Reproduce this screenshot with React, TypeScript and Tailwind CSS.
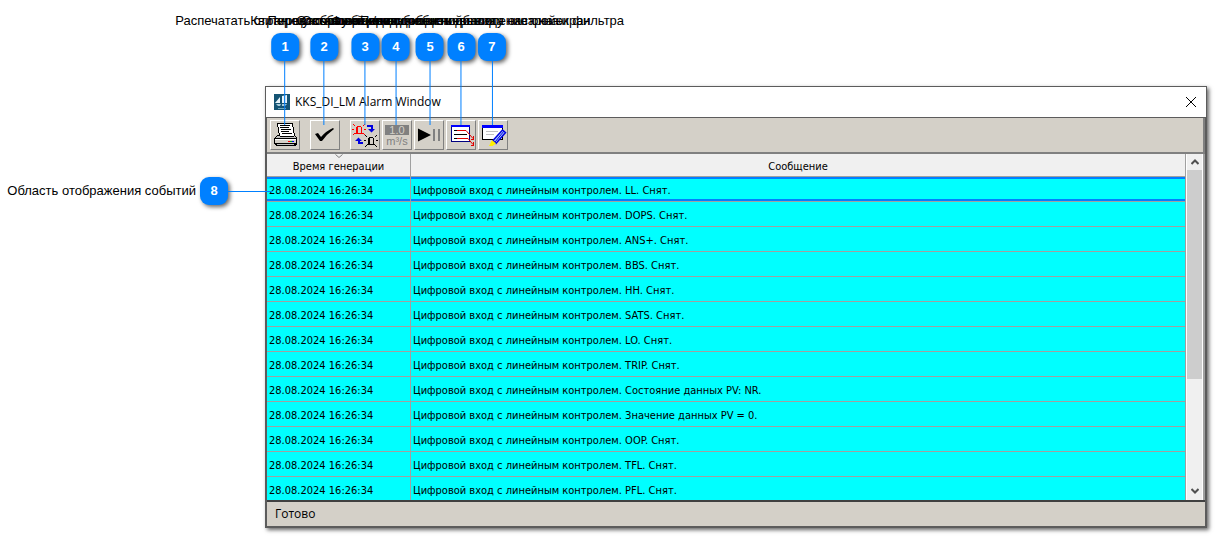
import type { ReactNode } from 'react'

type AlarmEvent = { time: string; message: string }

const PREFIX = 'Цифровой вход с линейным контролем. '

const events: AlarmEvent[] = [
  'LL. Снят.',
  'DOPS. Снят.',
  'ANS+. Снят.',
  'BBS. Снят.',
  'HH. Снят.',
  'SATS. Снят.',
  'LO. Снят.',
  'TRIP. Снят.',
  'Состояние данных PV: NR.',
  'Значение данных PV = 0.',
  'OOP. Снят.',
  'TFL. Снят.',
  'PFL. Снят.',
].map((m) => ({ time: '28.08.2024 16:26:34', message: PREFIX + m }))

const callouts = [
  { n: 1, pos: 'left-[285px]', text: 'Распечатать страницу событий окна' },
  { n: 2, pos: 'left-[324px]', text: 'Квитировать сообщения' },
  { n: 3, pos: 'left-[365px]', text: 'Переключить режим сообщений' },
  { n: 4, pos: 'left-[396px]', text: 'Отображение единиц измерения' },
  { n: 5, pos: 'left-[430px]', text: 'Остановить/возобновить обновление окна' },
  { n: 6, pos: 'left-[461px]', text: 'Функция подробного вывода окна на экран' },
  { n: 7, pos: 'left-[492px]', text: 'Подключение к диалогу настройки фильтра' },
]

function Badge({ n }: { n: number }) {
  return (
    <span className="flex size-7 shrink-0 items-center justify-center rounded-[9px] bg-[#0080ff] text-[13px] font-bold text-white shadow-[2px_2px_4px_rgba(0,0,0,0.6)]">
      {n}
    </span>
  )
}

function ToolButton({ label, children }: { label: string; children: ReactNode }) {
  return (
    <button
      type="button"
      aria-label={label}
      className="size-[30px] border border-t-white border-l-white border-r-[#808080] border-b-[#808080] bg-[#d4d0c8]"
    >
      <svg viewBox="1 1 28 28" className="block size-7">{children}</svg>
    </button>
  )
}

function PrinterIcon() {
  return (
    <g shapeRendering="crispEdges">
      <path d="M7 15h17l3 3v6l-2 2H6l-2-2v-6z" fill="#000" />
      <path d="M7.500 3.500h15l2 13h-15z" fill="#fff" stroke="#000" />
      <path d="M10 5.500h10M10 7.500h9M11 9.500h10M11 11.500h8M12 13.500h10" stroke="#000" />
      <path d="M7 16h2l1 1h14v-1l2 2H5z" fill="#c0c0c0" />
      <path d="M5 19h21v4H5z" fill="#d4d0c8" />
      <path d="M5 19h21v1H5z" fill="#fff" />
      <path d="M7 24h17v1H7z" fill="#c0c0c0" />
      <path d="M18 21h2v1h-2z" fill="#f00" />
      <path d="M20 21h2v1h-2z" fill="#0a0" />
      <path d="M22 21h2v1h-2z" fill="#00f" />
    </g>
  )
}

function LampSwapIcon() {
  return (
    <g fill="none">
      <g shapeRendering="crispEdges">
        <path d="M6.500 13.500v-6l1-1h3l1 1v6zM5 13.500h8M7.500 7v6" stroke="#f00" />
        <path d="M2 9.500h2M14 9.500h2" stroke="#f00" />
        <path d="M18.500 24.500v-6l1-1h3l1 1v6zM17 24.500h8M19.500 18v6" stroke="#000" />
        <path d="M14 20.500h2M26 20.500h2" stroke="#000" />
        <path d="M17 6h5v4M13 23H9v-3" stroke="#0000e0" strokeWidth="2" />
      </g>
      <path d="M3 4l2 2M15 4l-2 2M3 15l2-2M15 15l-2-2" stroke="#f00" />
      <path d="M15 15l2 2M27 15l-2 2M15 27l2-2M27 27l-2-2" stroke="#000" />
      <path d="M18 9h7l-3.500 3.500zM5 21h7l-3.500-3.500z" fill="#0000e0" />
    </g>
  )
}

function UnitsIcon() {
  return (
    <g fontFamily="Liberation Sans, sans-serif" textAnchor="middle">
      <path d="M3 5h24v10H3z" fill="#808080" />
      <text x="15" y="14" fontSize="11" fill="#d4d0c8">1.0</text>
      <text x="15" y="25" fontSize="11" fill="#808080">m³/s</text>
    </g>
  )
}

function ListExportIcon() {
  return (
    <g fill="none">
      <g shapeRendering="crispEdges">
        <path d="M5.500 6.500h18v15h-18z" fill="#fff" stroke="#000080" />
        <path d="M5 5h19v2H5z" fill="#0000ff" />
        <path d="M8 10.500h3M8 14.500h13M8 18.500h3" stroke="#000" />
        <path d="M11 10.500h9M11 18.500h11" stroke="#e00000" />
        <path d="M27.500 16v3h-3M27.500 22v3h-3" stroke="#e00000" />
      </g>
      <path d="M20 10.500l7 8M22 18.500l5 6" stroke="#e00000" />
    </g>
  )
}

function FilterEditIcon() {
  return (
    <g fill="none">
      <path d="M4.500 6.500h20v13h-20z" fill="#fff" stroke="#000" shapeRendering="crispEdges" />
      <path d="M4 5h21v3H4z" fill="#0000ff" shapeRendering="crispEdges" />
      <path d="M8 11.500h12M8 14.500h8" stroke="#c0c0c0" />
      <path d="M24.500 10l3 2.500-9.500 11-3-3z" fill="#a8c8ff" stroke="#0000e0" strokeWidth="1.500" />
      <path d="M26 11l-9 11" stroke="#0000e0" />
      <path d="M14 20l4 3.500-3.500 2.500H11z" fill="#ffef00" />
    </g>
  )
}

function Toolbar() {
  return (
    <div className="flex border-r-2 border-b-2 border-[#808080] bg-[#d4d0c8] px-[3px] py-0.5">
      <div className="flex gap-2.5">
        <ToolButton label="Печать"><PrinterIcon /></ToolButton>
        <ToolButton label="Квитировать">
          <path d="M5 14l3-1 3 4q5-6 12-9l1 1q-7 5-12 12h-2z" fill="#000" />
        </ToolButton>
        <div className="flex gap-0.5">
          <ToolButton label="Переключить"><LampSwapIcon /></ToolButton>
          <ToolButton label="Единицы измерения"><UnitsIcon /></ToolButton>
          <ToolButton label="Пауза">
            <path d="M4 8.500l13 6.500-13 6.500z" fill="#000" />
            <path d="M19 9h2v12h-2zM24 9h2v12h-2z" fill="#808080" />
          </ToolButton>
          <ToolButton label="Подробно"><ListExportIcon /></ToolButton>
          <ToolButton label="Фильтр"><FilterEditIcon /></ToolButton>
        </div>
      </div>
    </div>
  )
}

function EventTable() {
  return (
    <table className="w-full table-fixed border-separate border-spacing-0 font-['DejaVu_Sans_Condensed','DejaVu_Sans',sans-serif] text-[11px] leading-4 text-black">
      <colgroup>
        <col className="w-36" />
        <col />
      </colgroup>
      <thead>
        <tr className="h-[23px] bg-[#f0f0f0]">
          <th className="relative border-r border-b border-[#a0a0a0] p-0 pt-1 font-normal">
            <svg viewBox="0 0 8 4" className="absolute top-0 left-[68px] h-1 w-2" fill="none" stroke="#808080">
              <path d="M0.500 0.500L4 3.500L7.500 0.500" />
            </svg>
            Время генерации
          </th>
          <th className="border-r border-b border-[#a0a0a0] p-0 pt-1 font-normal">Сообщение</th>
        </tr>
      </thead>
      <tbody>
        {events.map((e, i) => (
          <tr
            key={i}
            className={i === 0
              ? 'h-[25px] bg-[#00ffff] shadow-[inset_0_2px_#0080ff,inset_0_-3px_#0080ff]'
              : 'h-[25px] bg-[#00ffff]'}
          >
            <td className="border-r border-b border-[#a0a0a0] p-0 pt-1 pl-0.5 whitespace-nowrap">{e.time}</td>
            <td className="border-r border-b border-[#a0a0a0] p-0 pt-1 pl-0.5 whitespace-nowrap">{e.message}</td>
          </tr>
        ))}
      </tbody>
    </table>
  )
}

function ScrollBar() {
  return (
    <div className="flex w-[17px] shrink-0 flex-col border-x border-white bg-[#f0f0f0]">
      <button type="button" aria-label="Вверх" className="flex h-4 items-center justify-center">
        <svg viewBox="0 0 8 6" className="h-1.5 w-2" fill="none" stroke="#505050" strokeWidth="2">
          <path d="M0.500 5L4 1.500L7.500 5" />
        </svg>
      </button>
      <div className="flex-1">
        <div className="h-[67%] bg-[#cdcdcd]" />
      </div>
      <button type="button" aria-label="Вниз" className="flex h-[18px] items-center justify-center">
        <svg viewBox="0 0 8 6" className="h-1.5 w-2" fill="none" stroke="#505050" strokeWidth="2">
          <path d="M0.500 1L4 4.500L7.500 1" />
        </svg>
      </button>
    </div>
  )
}

function AlarmWindow() {
  return (
    <section className="border border-b-2 border-[#5c5c5c] bg-white shadow-[2px_2px_4px_rgba(0,0,0,0.6)]">
      <header className="flex h-[30px] items-center gap-[5px] px-2">
        <svg viewBox="0 0 16 16" className="size-4">
          <path d="M0 0h16v16H0z" fill="#145474" />
          <path d="M1 9l5-6v6zM8 2l5-1v8H8z" fill="#e8f4fa" />
          <path d="M10.500 2v7" stroke="#6fa6bd" />
          <path d="M2 10h5l-1 2H4zM8 10h5l-2 2H8z" fill="#a8ccdc" />
          <path d="M4 14.500h8" stroke="#6fa6bd" />
        </svg>
        <h1 className="font-['Open_Sans',sans-serif] text-xs text-black">KKS_DI_LM Alarm Window</h1>
        <button type="button" aria-label="Закрыть" className="ml-auto p-0.5">
          <svg viewBox="0 0 10 10" className="size-2.5" stroke="#000">
            <path d="M0 0L10 10M10 0L0 10" />
          </svg>
        </button>
      </header>
      <div className="border-x border-t border-[#5c5c5c]">
        <Toolbar />
        <div className="flex h-[346px] overflow-hidden border-r-2 border-[#a0a0a0]">
          <div className="min-w-0 flex-1"><EventTable /></div>
          <ScrollBar />
        </div>
        <footer className="border-t-2 border-[#404040] bg-[#d4d0c8] px-2 py-0.5 font-['Open_Sans',sans-serif] text-xs leading-5 text-black">
          Готово
        </footer>
      </div>
    </section>
  )
}

export default function App() {
  return (
    <main className="relative bg-white pt-[86px] pr-[9px] pb-2.5 pl-[265px] font-['Liberation_Sans',sans-serif] text-[13px] text-black">
      <AlarmWindow />
      {callouts.map((c) => (
        <div key={c.n} className={`absolute top-3 flex -translate-x-1/2 flex-col items-center ${c.pos}`}>
          <span className="mb-[3px] leading-[18px] whitespace-nowrap">{c.text}</span>
          <Badge n={c.n} />
          <span className="h-16 w-px bg-[#0080ff]" />
        </div>
      ))}
      <div className="absolute top-[177px] left-0 flex w-[272px] items-center justify-end">
        <span className="mr-1 whitespace-nowrap">Область отображения событий</span>
        <Badge n={8} />
        <span className="h-px w-11 bg-[#0080ff]" />
      </div>
    </main>
  )
}
